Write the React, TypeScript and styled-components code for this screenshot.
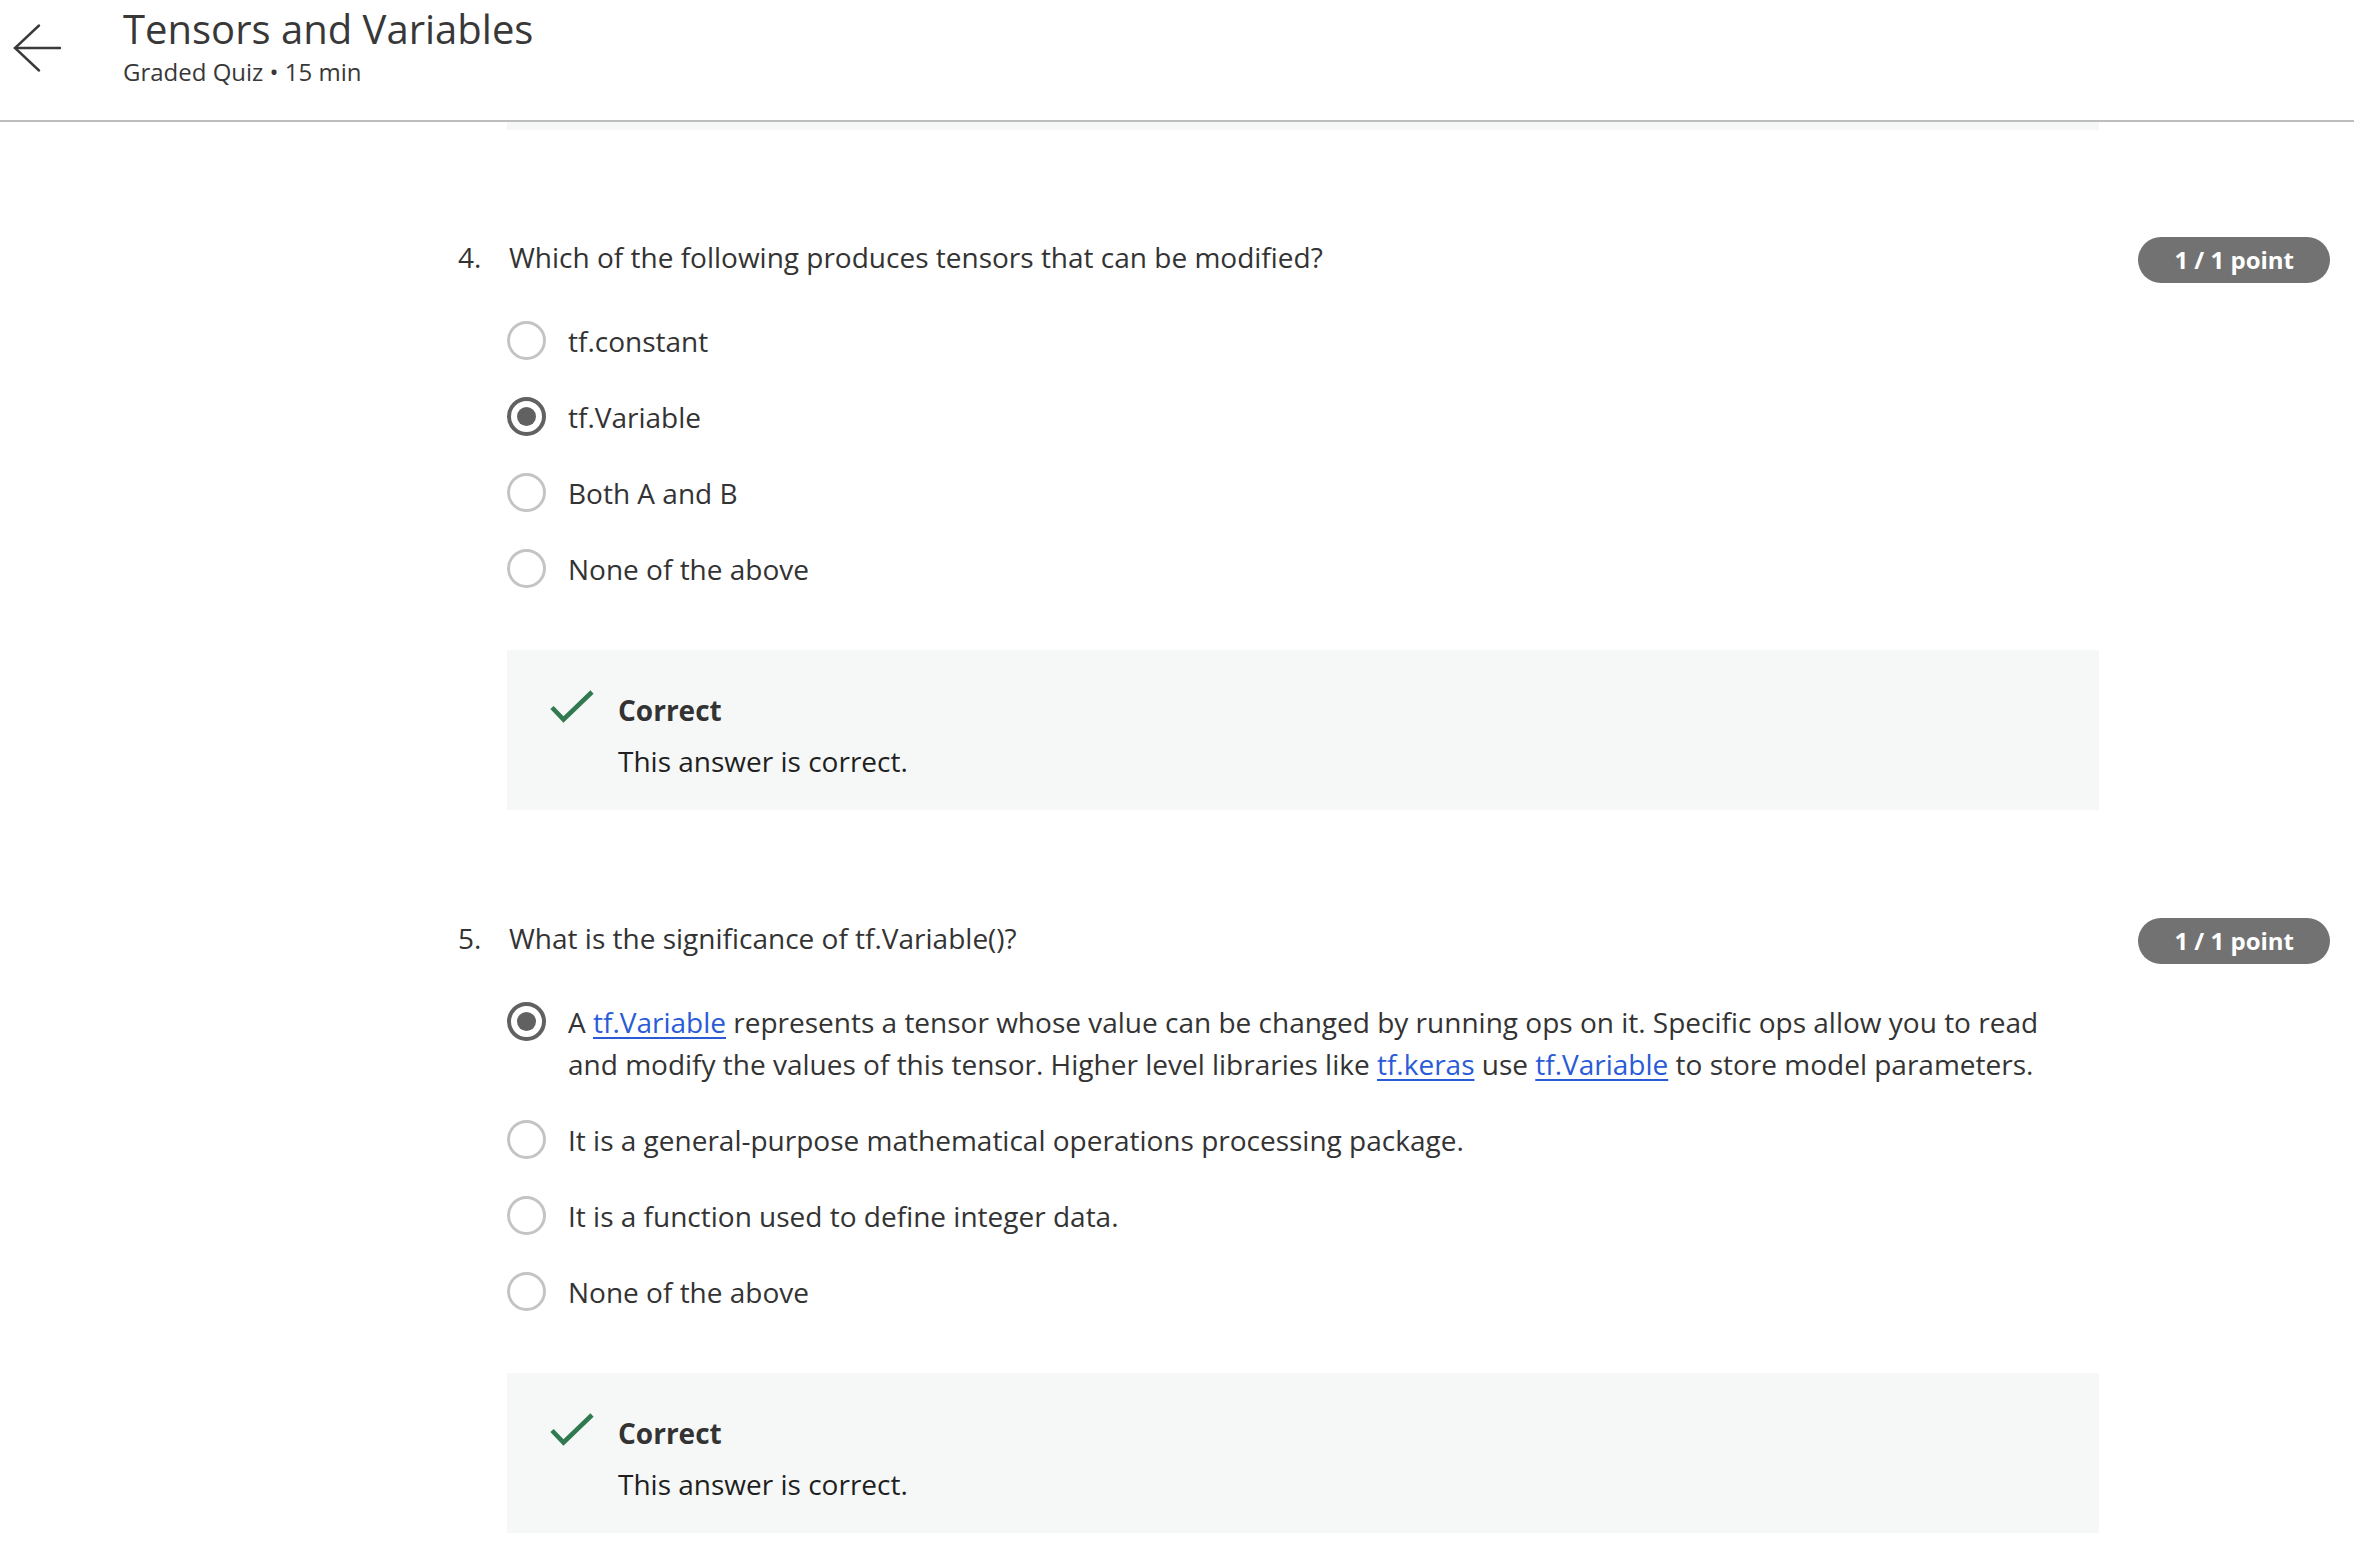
import React from 'react';
import styled, { createGlobalStyle } from 'styled-components';

const GlobalStyle = createGlobalStyle`
  body {
    margin: 0;
    background: #ffffff;
    font-family: "Open Sans", "Liberation Sans", sans-serif;
    color: #333333;
  }
`;

type Option = { label: React.ReactNode; selected?: boolean };
type Question = { num: string; text: string; options: Option[] };

function getQuestions(): Question[] {
    return [
        {
            num: '4.',
            text: 'Which of the following produces tensors that can be modified?',
            options: [
                { label: 'tf.constant' },
                { label: 'tf.Variable', selected: true },
                { label: 'Both A and B' },
                { label: 'None of the above' },
            ],
        },
        {
            num: '5.',
            text: 'What is the significance of tf.Variable()?',
            options: [
                {
                    label: (
                        <>
                            A <Link href="#">tf.Variable</Link> represents a tensor whose value can be changed by running ops on it. Specific ops allow you to read and modify the values of this tensor. Higher level libraries like <Link href="#">tf.keras</Link> use <Link href="#">tf.Variable</Link> to store model parameters.
                        </>
                    ),
                    selected: true,
                },
                { label: 'It is a general-purpose mathematical operations processing package.' },
                { label: 'It is a function used to define integer data.' },
                { label: 'None of the above' },
            ],
        },
    ];
}

export default function App() {
    const questions = getQuestions();
    return (
        <Page>
            <GlobalStyle />
            <Header>
                <BackButton aria-label="Back">
                    <svg width="50" height="50" viewBox="0 0 50 50" fill="none" stroke="#3a3a3a" strokeWidth="2.4" strokeLinecap="round">
                        <path d="M2 24 H47" />
                        <path d="M26 1.5 L2 24 L26 46.5" />
                    </svg>
                </BackButton>
                <TitleBlock>
                    <Title>Tensors and Variables</Title>
                    <Subtitle>Graded Quiz • 15 min</Subtitle>
                </TitleBlock>
            </Header>
            <Content>
                <Feedback $tail />
                {questions.map((q) => (
                    <QuestionBlock key={q.num}>
                        <QuestionRow>
                            <QNum>{q.num}</QNum>
                            <QText>{q.text}</QText>
                            <Points>1 / 1 point</Points>
                        </QuestionRow>
                        <Options>
                            {q.options.map((o, i) => (
                                <OptionRow key={i}>
                                    <Radio $selected={!!o.selected} />
                                    <OptionLabel>{o.label}</OptionLabel>
                                </OptionRow>
                            ))}
                        </Options>
                        <Feedback />
                    </QuestionBlock>
                ))}
            </Content>
        </Page>
    );
}

function Feedback({ $tail }: { $tail?: boolean }) {
    return (
        <FeedbackBox $tail={$tail}>
            <svg width="44" height="34" viewBox="0 0 44 34" fill="none" stroke="#317a50" strokeWidth="4.6">
                <path d="M2 17.5 L13.5 29.5 L42 2" />
            </svg>
            <FeedbackText>
                <FeedbackTitle>Correct</FeedbackTitle>
                <FeedbackBody>This answer is correct.</FeedbackBody>
            </FeedbackText>
        </FeedbackBox>
    );
}

const Page = styled.div`
  width: 2354px;
  height: 1548px;
  overflow: hidden;
  display: flex;
  flex-direction: column;
`;

const Header = styled.header`
  flex: none;
  height: 120px;
  display: flex;
  align-items: flex-start;
  border-bottom: 2px solid #bdbdbd;
`;

const BackButton = styled.div`
  width: 50px;
  height: 50px;
  margin: 24px 0 0 13px;
`;

const TitleBlock = styled.div`
  margin: 2px 0 0 60px;
  display: flex;
  flex-direction: column;
`;

const Title = styled.h1`
  margin: 0;
  font-size: 40px;
  line-height: 54px;
  font-weight: 400;
  color: #383838;
`;

const Subtitle = styled.div`
  font-size: 24px;
  line-height: 32px;
  color: #383838;
`;

const Content = styled.main`
  flex: 1;
  overflow: hidden;
  padding: 0 24px 0 458px;
`;

const QuestionBlock = styled.section`
  margin-top: 106px;
  & + & {
    margin-top: 107px;
  }
`;

const QuestionRow = styled.div`
  display: flex;
  align-items: flex-start;
`;

const QNum = styled.span`
  width: 51px;
  flex: none;
  font-size: 28px;
  line-height: 42px;
`;

const QText = styled.span`
  flex: 1;
  font-size: 28px;
  line-height: 42px;
`;

const Points = styled.span`
  flex: none;
  height: 46px;
  margin-top: 1px;
  padding: 0 36px;
  border-radius: 23px;
  background: #727272;
  color: #ffffff;
  font-size: 24px;
  font-weight: 700;
  line-height: 46px;
`;

const Options = styled.div`
  margin: 37px 0 0 49px;
  display: flex;
  flex-direction: column;
  gap: 34px;
`;

const OptionRow = styled.label`
  display: flex;
  align-items: flex-start;
`;

const Radio = styled.span<{ $selected: boolean }>`
  flex: none;
  box-sizing: border-box;
  width: 39px;
  height: 39px;
  margin-top: 1px;
  border-radius: 50%;
  border: ${(p) => (p.$selected ? '4.5px solid #616161' : '3px solid #c4c4c4')};
  display: flex;
  align-items: center;
  justify-content: center;
  &::after {
    content: '';
    display: ${(p) => (p.$selected ? 'block' : 'none')};
    width: 19px;
    height: 19px;
    border-radius: 50%;
    background: #616161;
  }
`;

const OptionLabel = styled.span`
  margin-left: 22px;
  max-width: 1510px;
  font-size: 28px;
  line-height: 42px;
  color: #333333;
`;

const Link = styled.a`
  color: #2a5bd7;
  text-decoration: underline;
  text-decoration-thickness: 2px;
  text-underline-offset: 4px;
`;

const FeedbackBox = styled.div<{ $tail?: boolean }>`
  box-sizing: border-box;
  width: 1592px;
  height: 160px;
  margin: ${(p) => (p.$tail ? '-152px 0 0 49px' : '60px 0 0 49px')};
  padding: 39px 0 0 43px;
  background: #f6f8f7;
  display: flex;
  align-items: flex-start;
  svg {
    flex: none;
    margin-top: 1px;
  }
`;

const FeedbackText = styled.div`
  margin-left: 24px;
  display: flex;
  flex-direction: column;
  gap: 9px;
  color: #1f1f1f;
`;

const FeedbackTitle = styled.div`
  font-size: 28px;
  line-height: 42px;
  font-weight: 700;
  color: #333333;
`;

const FeedbackBody = styled.div`
  font-size: 28px;
  line-height: 42px;
`;
